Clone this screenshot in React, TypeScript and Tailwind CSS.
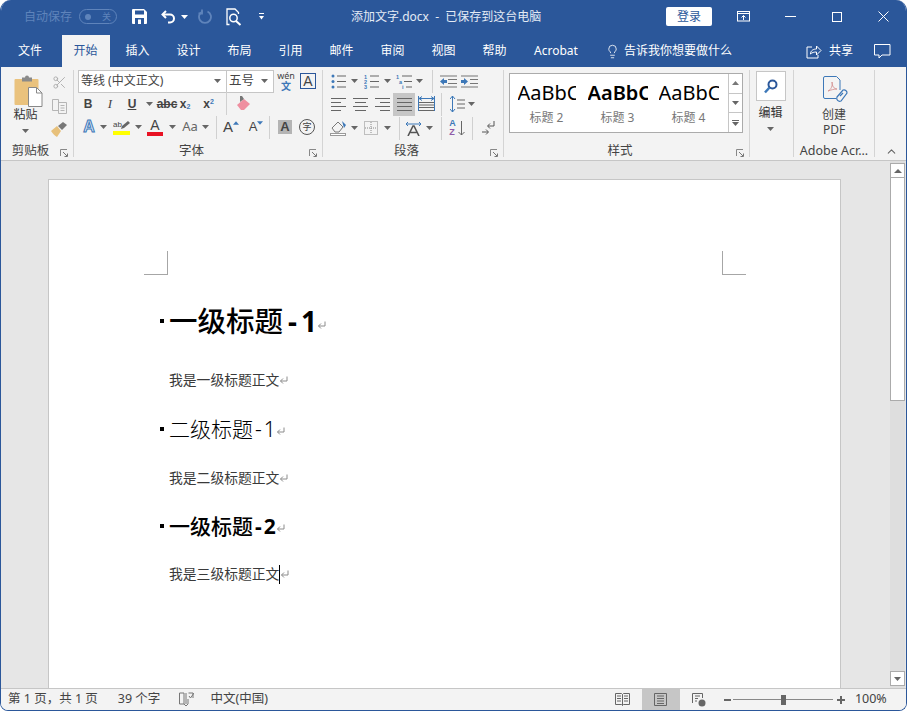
import type { ReactNode } from "react";
import { ChevronUp, Lightbulb, Scissors } from "lucide-react";

const Caret = ({ c = "" }: { c?: string }) => (
  <svg width="7" height="4" viewBox="0 0 7 4" className={`shrink-0 ${c}`}>
    <path d="M0 0h7L3.500 4z" fill="#666" />
  </svg>
);

const Launcher = () => (
  <svg width="9" height="9" viewBox="0 0 9 9" fill="none">
    <path d="M.5 7V.5H7" stroke="#888" />
    <path d="M3 3l4 4M4.500 7.500h3v-3" stroke="#777" />
  </svg>
);

const Sep = ({ h = "h-[23px]" }: { h?: string }) => <div className={`${h} w-px shrink-0 bg-[#d0d0d0]`} />;

const Cell = ({ w, children }: { w: string; children?: ReactNode }) => (
  <div className={`${w} flex h-full shrink-0 items-center justify-center`}>{children}</div>
);

const Lines = ({ rows, w = 15 }: { rows: [number, number][]; w?: number }) => (
  <svg width={w} height="15" viewBox={`0 0 ${w} 15`}>
    {rows.map(([x, l], i) => (
      <rect key={i} x={x} y={1 + i * (12 / (rows.length - 1))} width={l} height="1" fill="#666" />
    ))}
  </svg>
);

const Group = ({ w, label, launcher, children }: { w: string; label?: string; launcher?: boolean; children: ReactNode }) => (
  <div className={`${w} mt-[3px] flex h-[87px] shrink-0 flex-col border-r border-[#d4d4d4]`}>
    <div className="h-[71px] shrink-0">{children}</div>
    <div className="flex flex-1 items-center pt-[2px]">
      <div className="flex-1 truncate text-center text-[12.500px] leading-[16px] text-[#444]">{label}</div>
      {launcher ? <div className="mr-[4px] mt-[5px] flex"><Launcher /></div> : null}
    </div>
  </div>
);

const Tab = ({ w, active, children }: { w: string; active?: boolean; children: ReactNode }) => (
  <div className={`${w} flex h-full shrink-0 items-center justify-center`}>
    <div className={active ? "flex h-full w-[48px] items-center justify-center bg-[#f3f3f3] text-[#2b579a]" : "text-white"}>{children}</div>
  </div>
);

const Return = ({ c = "" }: { c?: string }) => (
  <svg width="9" height="9" viewBox="0 0 9 9" fill="none" className={`shrink-0 ${c}`}>
    <path d="M8 .5v4.500H1.500M4 2.500L1.500 5 4 7.500" stroke="#8c8c8c" />
  </svg>
);

const Bullet = () => <span className="mr-[5px] h-[4px] w-[4px] shrink-0 bg-black" />;

const Gallery = ({ bold, label, clip }: { bold?: boolean; label: string; clip: string }) => (
  <div className="flex w-[71px] shrink-0 flex-col items-center pt-[2px]">
    <div className={`${clip} h-[33px] overflow-hidden whitespace-nowrap font-['Noto_Sans',sans-serif] text-[20px] leading-[33px] text-black ${bold ? "font-semibold" : ""}`}>AaBbC</div>
    <div className="text-[12px] leading-[17px] text-[#777]">{label}</div>
  </div>
);

export default function App() {
  return (
    <div className="h-[711px] w-[907px] overflow-hidden bg-white font-['Noto_Sans','Noto_Sans_CJK_SC',sans-serif]">
      <div className="flex h-[711px] flex-col overflow-hidden rounded-t-[11px] rounded-b-[8px] border-x border-b border-[#2b579a]">
        {/* title bar */}
        <div className="flex h-[33px] shrink-0 items-center bg-[#2b579a] text-white">
          <div className="ml-[23px] w-[50px] text-[12px] text-[#5f84bb]">自动保存</div>
          <div className="ml-[5px] flex h-[15px] w-[38px] items-center justify-between rounded-full border border-[#5f84bb] px-[5px] text-[9px] text-[#5f84bb]">
            <span className="h-[6px] w-[6px] rounded-full bg-[#5f84bb]" />
            <span>关</span>
          </div>
          <svg width="15" height="15" viewBox="0 0 15 15" className="ml-[15px]">
            <path d="M0 1a1 1 0 011-1h11l3 3v11a1 1 0 01-1 1H1a1 1 0 01-1-1z" fill="#fff" />
            <rect x="3" y="1.500" width="9" height="4" fill="#2b579a" />
            <rect x="3" y="9" width="9" height="6" fill="#2b579a" />
            <rect x="6" y="10.500" width="3" height="4.500" fill="#fff" />
          </svg>
          <svg width="16" height="15" viewBox="0 0 16 15" fill="none" className="ml-[14px]">
            <path d="M5 2L1.500 5.500 5 9" stroke="#fff" strokeWidth="2" />
            <path d="M2 5.500h7a4 4 0 014 4v0a4 4 0 01-4 4H7" stroke="#fff" strokeWidth="2" />
          </svg>
          <Caret c="ml-[4px] [&>path]:fill-white" />
          <svg width="15" height="15" viewBox="0 0 15 15" fill="none" className="ml-[9px]">
            <path d="M10.500 2.500a6 6 0 11-5 0" stroke="#5f84bb" strokeWidth="1.800" />
            <path d="M5 .500v4h-3.500" stroke="#5f84bb" strokeWidth="1.800" />
          </svg>
          <svg width="16" height="18" viewBox="0 0 16 18" fill="none" className="ml-[14px]">
            <path d="M3.500 16.500H1V1h8l3.500 3.500V6" stroke="#fff" strokeWidth="1.300" />
            <circle cx="7.500" cy="10" r="3.700" stroke="#fff" strokeWidth="1.500" />
            <path d="M10 13l4.500 4" stroke="#fff" strokeWidth="2" />
          </svg>
          <svg width="7" height="8" viewBox="0 0 7 8" className="ml-[16px]">
            <rect x="1" width="5" height="1" fill="#fff" />
            <path d="M1 3h5L3.500 6.500z" fill="#fff" />
          </svg>
          <div className="ml-[86px] w-[195px] whitespace-nowrap text-[12px] text-[#e4ebf5]">添加文字.docx&nbsp;&nbsp;-&nbsp;&nbsp;已保存到这台电脑</div>
          <div className="ml-[120px] flex h-[19px] w-[46px] items-center justify-center rounded-[2px] bg-white text-[12px] text-[#2b579a]">登录</div>
          <svg width="14" height="12" viewBox="0 0 14 12" fill="none" className="ml-[25px]">
            <rect x=".5" y=".5" width="12" height="9.500" stroke="#fff" />
            <path d="M.5 2.500h12M6.500 9V4.500M4.500 6.500l2-2 2 2" stroke="#fff" />
          </svg>
          <div className="ml-[34px] h-px w-[11px] bg-white" />
          <div className="ml-[36px] h-[10px] w-[10px] border border-white" />
          <svg width="11" height="11" viewBox="0 0 11 11" className="ml-[36px]">
            <path d="M.5.500l10 10M10.500.500l-10 10" stroke="#fff" />
          </svg>
        </div>
        {/* tab row */}
        <div className="flex h-[34px] shrink-0 items-end bg-[#2b579a] text-[12px]">
          <div className="flex h-[32px] w-full items-stretch">
            <Tab w="w-[58px]">文件</Tab>
            <Tab w="w-[53px]" active>开始</Tab>
            <Tab w="w-[51px]">插入</Tab>
            <Tab w="w-[51px]">设计</Tab>
            <Tab w="w-[51px]">布局</Tab>
            <Tab w="w-[51px]">引用</Tab>
            <Tab w="w-[51px]">邮件</Tab>
            <Tab w="w-[51px]">审阅</Tab>
            <Tab w="w-[51px]">视图</Tab>
            <Tab w="w-[51px]">帮助</Tab>
            <Tab w="w-[72px]">Acrobat</Tab>
            <div className="ml-[13px] flex items-center text-white">
              <Lightbulb size={15} strokeWidth={1.3} />
              <span className="ml-[4px] whitespace-nowrap text-[12px]">告诉我你想要做什么</span>
            </div>
            <svg width="16" height="15" viewBox="0 0 16 15" fill="none" className="ml-[74px] mt-[9px]">
              <path d="M6 3H1v11h11v-3" stroke="#fff" />
              <path d="M4.500 10c0-3.500 3-5 6-5V2l4.500 4.500L10.500 11V8c-2.500 0-4.500.5-6 2z" stroke="#fff" />
            </svg>
            <span className="ml-[7px] flex items-center text-[12px] text-white">共享</span>
            <svg width="17" height="15" viewBox="0 0 17 15" fill="none" className="ml-[21px] mt-[9px]">
              <path d="M.5.500h15.500v10.500H8L5 14v-3H.5z" stroke="#fff" />
            </svg>
          </div>
        </div>
        {/* ribbon */}
        <div className="flex h-[94px] shrink-0 border-b border-[#c6c6c6] bg-[#f3f3f3] text-[#444]">
          <Group w="w-[73px]" label="剪贴板" launcher>
            <div className="flex h-full">
              <div className="flex w-[49px] flex-col items-center pt-[5px]">
                <svg width="29" height="32" viewBox="0 0 29 32" fill="none" className="ml-[5px]">
                  <rect x="0.500" y="4" width="24" height="26" rx="1" fill="#eac27d" />
                  <path d="M8 2.500h3a2 2 0 014 0h3v4H8z" fill="#8a8a8a" />
                  <path d="M14.500 12.500h8l5.500 5.500v13.500H14.500z" fill="#fff" stroke="#888" />
                  <path d="M22.500 12.500V18H28" stroke="#888" />
                </svg>
                <div className="mt-[0px] text-[12px] leading-[16px] text-[#333]">粘贴</div>
                <Caret c="mt-[6px]" />
              </div>
              <div className="flex w-[18px] flex-col items-center">
                <div className="flex h-[23px] items-center pt-[2px]"><Scissors size={15} color="#a8a8a8" strokeWidth={1.4} /></div>
                <div className="flex h-[24px] items-center pt-[2px]">
                  <svg width="15" height="15" viewBox="0 0 15 15" fill="none">
                    <path d="M.5.500h6v11h-6zM6.500 3.500h8v11h-8zM8.500 6.500h4M8.500 9h4M8.500 11.500h4" stroke="#b5b5b5" />
                  </svg>
                </div>
                <div className="flex h-[24px] items-center">
                  <svg width="16" height="15" viewBox="0 0 16 15">
                    <path d="M0 9l6-5 4 5-4 6c-2-1-4-3-6-6z" fill="#e7c07a" />
                    <path d="M7 4l5-4 4 3-5 5z" fill="#777" />
                  </svg>
                </div>
              </div>
            </div>
          </Group>
          <Group w="w-[249px]" label="字体" launcher>
            <div className="flex h-[22px] items-center pl-[4px]">
              <div className="flex h-[23px] w-[149px] items-center justify-between border border-[#c6c6c6] bg-white pl-[2px] pr-[5px] text-[12px] text-[#444]">
                等线 (中文正文)<Caret />
              </div>
              <div className="flex h-[23px] w-[47px] items-center justify-between border border-l-0 border-[#c6c6c6] bg-white pl-[2px] pr-[5px] text-[12.500px]">
                五号<Caret />
              </div>
              <div className="ml-[2px] flex w-[20px] flex-col items-center text-[9px] leading-[10px] text-[#444]">
                <span>wén</span>
                <span className="text-[10px] font-bold text-[#3d78b8]">文</span>
              </div>
              <div className="ml-[4px] flex h-[16px] w-[16px] items-center justify-center border border-[#2b579a] font-['Liberation_Sans',sans-serif] text-[14px] text-[#444]">A</div>
            </div>
            <div className="flex h-[23px] items-center pl-[3px] font-['Liberation_Sans',sans-serif]">
              <Cell w="w-[22px]"><b className="text-[12px]">B</b></Cell>
              <Cell w="w-[22px]"><i className="font-['Liberation_Serif',serif] text-[13px]">I</i></Cell>
              <Cell w="w-[22px]"><span className="text-[12px] font-bold underline">U</span></Cell>
              <Cell w="w-[12px]"><Caret /></Cell>
              <Cell w="w-[24px]"><span className="text-[12px] font-bold line-through">abc</span></Cell>
              <Cell w="w-[12px]"><span className="text-[12px] font-bold">x<sub className="text-[7px] text-[#3d78b8]">2</sub></span></Cell>
              <Cell w="w-[35px]"><span className="text-[12px] font-bold">x<sup className="text-[7px] text-[#3d78b8]">2</sup></span></Cell>
              <Sep />
              <Cell w="w-[33px]">
                <svg width="15" height="15" viewBox="0 0 15 15">
                  <path d="M1 9l7-6 6 5-6 6H5z" fill="#ef8fa0" />
                  <path d="M4 0l2 0 2 3-4 3z" fill="#777" />
                </svg>
              </Cell>
            </div>
            <div className="flex h-[24px] items-center pl-[5px]">
              <Cell w="w-[20px]"><span className="font-['Liberation_Sans',sans-serif] text-[16px] font-bold leading-none text-[#dbe8f7] [-webkit-text-stroke:1px_#3d78b8]">A</span></Cell>
              <Cell w="w-[8px]"><Caret /></Cell>
              <Cell w="w-[28px]">
                <div className="flex flex-col items-center">
                  <svg width="17" height="11" viewBox="0 0 17 11">
                    <path d="M8 9l1-3 6-5 2 2-6 5z" fill="#666" />
                    <text x="0" y="7" fontSize="8" fill="#444" fontFamily="Liberation Sans">ab</text>
                  </svg>
                  <span className="h-[4px] w-[17px] bg-[#ffff00]" />
                </div>
              </Cell>
              <Cell w="w-[6px]"><Caret /></Cell>
              <Cell w="w-[28px]">
                <div className="flex flex-col items-center">
                  <span className="font-['Liberation_Sans',sans-serif] text-[14px] leading-[12px] text-[#444]">A</span>
                  <span className="mt-[1px] h-[4px] w-[16px] bg-[#e81123]" />
                </div>
              </Cell>
              <Cell w="w-[6px]"><Caret /></Cell>
              <Cell w="w-[28px]"><span className="ml-[2px] font-['Noto_Sans',sans-serif] text-[13px] text-[#666]">Aa</span></Cell>
              <Cell w="w-[4px]"><Caret /></Cell>
              <Cell w="w-[9px]" />
              <Sep />
              <Cell w="w-[28px]">
                <span className="font-['Liberation_Sans',sans-serif] text-[15px] text-[#444]">A</span>
                <svg width="6" height="4" viewBox="0 0 7 4" className="mb-[8px] shrink-0"><path d="M0 4h7L3.500 0z" fill="#3d78b8" /></svg>
              </Cell>
              <Cell w="w-[22px]">
                <span className="font-['Liberation_Sans',sans-serif] text-[13px] text-[#444]">A</span>
                <svg width="6" height="4" viewBox="0 0 7 4" className="mb-[8px] shrink-0"><path d="M0 0h7L3.500 4z" fill="#3d78b8" /></svg>
              </Cell>
              <Cell w="w-[2px]" />
              <Sep />
              <Cell w="w-[8px]" />
              <div className="flex h-[14px] w-[14px] shrink-0 items-center justify-center bg-[#b4b4b4] font-['Liberation_Sans',sans-serif] text-[13px] font-bold text-[#444]">A</div>
              <div className="ml-[7px] flex h-[16px] w-[16px] shrink-0 items-center justify-center rounded-full border border-[#555] text-[9px] text-[#444]">字</div>
            </div>
          </Group>
          <Group w="w-[181px]" label="段落" launcher>
            <div className="flex h-[22px] items-center pl-[5px]">
              <Cell w="w-[20px]">
                <svg width="15" height="15" viewBox="0 0 15 15">
                  <circle cx="2" cy="2" r="1.500" fill="#3d78b8" /><circle cx="2" cy="7.500" r="1.500" fill="#3d78b8" /><circle cx="2" cy="13" r="1.500" fill="#3d78b8" />
                  <path d="M6 1.500h9v1H6zM6 7h9v1H6zM6 12.500h9v1H6z" fill="#666" />
                </svg>
              </Cell>
              <Cell w="w-[13px]"><Caret /></Cell>
              <Cell w="w-[20px]">
                <svg width="15" height="15" viewBox="0 0 15 15">
                  <path d="M6 1.500h9v1H6zM6 7h9v1H6zM6 12.500h9v1H6z" fill="#666" />
                  <text x="0" y="5" fontSize="5.500" fill="#3d78b8" fontFamily="Liberation Sans" fontWeight="700">1</text>
                  <text x="0" y="10" fontSize="5.500" fill="#3d78b8" fontFamily="Liberation Sans" fontWeight="700">2</text>
                  <text x="0" y="15" fontSize="5.500" fill="#3d78b8" fontFamily="Liberation Sans" fontWeight="700">3</text>
                </svg>
              </Cell>
              <Cell w="w-[13px]"><Caret /></Cell>
              <Cell w="w-[19px]">
                <svg width="17" height="15" viewBox="0 0 17 15">
                  <path d="M7 1.500h10v1H7zM9 7h8v1H9zM11 12.500h6v1h-6z" fill="#666" />
                  <text x="1" y="5" fontSize="5.500" fill="#3d78b8" fontFamily="Liberation Sans" fontWeight="700">1</text>
                  <text x="4" y="10" fontSize="5.500" fill="#3d78b8" fontFamily="Liberation Sans" fontWeight="700">a</text>
                  <text x="7" y="15" fontSize="5.500" fill="#3d78b8" fontFamily="Liberation Sans" fontWeight="700">i</text>
                </svg>
              </Cell>
              <Cell w="w-[12px]"><Caret /></Cell>
              <Cell w="w-[7px]" />
              <Sep />
              <Cell w="w-[30px]">
                <svg width="17" height="13" viewBox="0 0 17 13">
                  <path d="M0 .5h17v1H0zM8 4h9v1H8zM8 8h9v1H8zM0 11.500h17v1H0z" fill="#777" />
                  <path d="M0 6.500L4 3v2h3v3H4v2z" fill="#3d78b8" />
                </svg>
              </Cell>
              <Cell w="w-[13px]">
                <svg width="17" height="13" viewBox="0 0 17 13" className="shrink-0">
                  <path d="M0 .5h17v1H0zM9 4h8v1H9zM9 8h8v1H9zM0 11.500h17v1H0z" fill="#777" />
                  <path d="M7 6.500L3 3v2H0v3h3v2z" fill="#3d78b8" />
                </svg>
              </Cell>
            </div>
            <div className="flex h-[24px] items-center pl-[4px]">
              <Cell w="w-[22px]"><Lines rows={[[0, 15], [0, 10], [0, 15], [0, 10]]} /></Cell>
              <Cell w="w-[22px]"><Lines rows={[[0, 15], [2, 11], [0, 15], [2, 11]]} /></Cell>
              <Cell w="w-[22px]"><Lines rows={[[0, 15], [5, 10], [0, 15], [5, 10]]} /></Cell>
              <div className="flex h-[23px] w-[22px] shrink-0 items-center justify-center bg-[#c6c6c6]"><Lines rows={[[0, 15], [0, 15], [0, 15], [0, 15]]} /></div>
              <Cell w="w-[22px]">
                <svg width="17" height="16" viewBox="0 0 17 16" fill="none">
                  <path d="M.5 0v15M16.500 0v15M1 2.500h15M4 .5L1 2.500l3 2M13 .5l3 2-3 2" stroke="#3d78b8" />
                  <path d="M1 6.500h15M1 9h15M1 11.500h15M1 14.500h15" stroke="#666" />
                </svg>
              </Cell>
              <Cell w="w-[4px]" />
              <Sep />
              <Cell w="w-[27px]">
                <svg width="15" height="16" viewBox="0 0 15 16" fill="none" className="ml-[3px] shrink-0">
                  <path d="M2.500 0v16M0 3l2.500-3L5 3M0 13l2.500 3L5 13" stroke="#3d78b8" />
                  <path d="M7 4h8M7 8h8M7 12h8" stroke="#666" />
                </svg>
              </Cell>
              <Cell w="w-[4px]"><Caret /></Cell>
            </div>
            <div className="flex h-[24px] items-center pl-[5px]">
              <Cell w="w-[20px]">
                <svg width="17" height="16" viewBox="0 0 17 16" fill="none">
                  <path d="M2 8l6-6 5 5-4 5H5z" stroke="#777" />
                  <path d="M12 1l4 4-2 3z" fill="#3d78b8" />
                  <rect x=".5" y="13.500" width="15" height="2" stroke="#999" fill="#fff" />
                </svg>
              </Cell>
              <Cell w="w-[13px]"><Caret /></Cell>
              <Cell w="w-[20px]">
                <svg width="14" height="14" viewBox="0 0 14 14" fill="none">
                  <rect x=".5" y=".5" width="13" height="13" stroke="#888" strokeDasharray="1 1" />
                  <path d="M7 1v12M1 7h12" stroke="#888" strokeDasharray="1 1" />
                </svg>
              </Cell>
              <Cell w="w-[13px]"><Caret /></Cell>
              <Cell w="w-[5px]" />
              <Sep />
              <Cell w="w-[27px]">
                <svg width="17" height="15" viewBox="0 0 17 15" fill="none" className="shrink-0">
                  <path d="M1 3h15M1 3l2-2M1 3l2 2M16 3l-2-2M16 3l-2 2" stroke="#3d78b8" />
                  <path d="M3 15l5-10h1l5 10M5.500 11.500h6" stroke="#555" strokeWidth="1.600" />
                </svg>
              </Cell>
              <Cell w="w-[4px]"><Caret /></Cell>
              <Cell w="w-[10px]" />
              <Sep />
              <Cell w="w-[30px]">
                <span className="flex flex-col font-['Liberation_Sans',sans-serif] text-[9px] font-bold leading-[9px]">
                  <span className="text-[#3d78b8]">A</span>
                  <span className="text-[#8f5aa8]">Z</span>
                </span>
                <svg width="7" height="15" viewBox="0 0 7 15" fill="none" className="ml-[2px]"><path d="M3.500 0v14M.5 11l3 3 3-3" stroke="#666" /></svg>
              </Cell>
              <Sep />
              <Cell w="w-[31px]">
                <svg width="13" height="14" viewBox="0 0 13 14" fill="none">
                  <path d="M12 0v5H6M8 2.500L5.500 5 8 7.500" stroke="#555" />
                  <path d="M0 11h6M4 8.500L6.500 11 4 13.500" stroke="#555" />
                </svg>
              </Cell>
            </div>
          </Group>
          <Group w="w-[246px]" label="样式" launcher>
            <div className="ml-[5px] mt-[3px] flex h-[60px] w-[234px] border border-[#ababab] bg-white">
              <div className="flex flex-1 pl-[1px]">
                <Gallery label="标题 2" clip="w-[58px]" />
                <Gallery bold label="标题 3" clip="w-[60px]" />
                <Gallery label="标题 4" clip="w-[60px]" />
              </div>
              <div className="flex w-[14px] flex-col border-l border-[#c6c6c6]">
                <div className="flex flex-1 items-center justify-center border-b border-[#c6c6c6]"><svg width="7" height="4" viewBox="0 0 7 4"><path d="M0 4h7L3.500 0z" fill="#777" /></svg></div>
                <div className="flex flex-1 items-center justify-center border-b border-[#c6c6c6]"><Caret /></div>
                <div className="flex flex-1 flex-col items-center justify-center gap-[1px]"><span className="h-px w-[7px] bg-[#666]" /><Caret /></div>
              </div>
            </div>
          </Group>
          <Group w="w-[44px]">
            <div className="flex flex-col items-center pr-[2px]">
              <div className="mt-[1px] flex h-[30px] w-[30px] items-center justify-center border border-[#c6c6c6] bg-white">
                <svg width="14" height="15" viewBox="0 0 14 15" fill="none">
                  <circle cx="8.500" cy="5.500" r="4" stroke="#2b579a" strokeWidth="2" />
                  <path d="M5.500 8.500L1 13.500" stroke="#3d78b8" strokeWidth="2.500" />
                </svg>
              </div>
              <div className="mt-[4px] text-[12px] leading-[16px] text-[#333]">编辑</div>
              <Caret c="mt-[6px]" />
            </div>
          </Group>
          <Group w="w-[81px]" label="Adobe Acr...">
            <div className="flex flex-col items-center">
              <svg width="26" height="29" viewBox="0 0 26 29" fill="none" className="ml-[4px] mt-[6px]">
                <path d="M17 14V4l-3.500-3.500H2A1.500 1.500 0 00.5 2v19A1.500 1.500 0 002 22.500h11" stroke="#3d78b8" />
                <path d="M5 15c3-1 5-6 4-9 0 4 2 7 5 7-3 0-6 1-9 2z" stroke="#d08a8a" strokeWidth=".8" />
                <path d="M14 21l6-7a3 3 0 014 3l-6 8a3 3 0 01-4-4zM17 20l3-3" stroke="#3d78b8" strokeWidth="1.200" />
              </svg>
              <div className="mt-[2px] text-[12px] leading-[16px] text-[#444]">创建</div>
              <div className="text-[12px] leading-[14px] text-[#444]">PDF</div>
            </div>
          </Group>
          <div className="flex flex-1 items-end justify-center pb-[2px] pl-[1px]">
            <ChevronUp size={13} color="#666" strokeWidth={2} />
          </div>
        </div>
        {/* document */}
        <div className="flex min-h-0 flex-1 bg-[#e6e6e6]">
          <div className="min-w-0 flex-1 overflow-hidden pl-[47px] pt-[18px]">
            <div className="h-[520px] w-[793px] border-x border-t border-[#c6c6c6] bg-white">
              <div className="ml-[95px] mr-[94px] mt-[71px] flex justify-between">
                <div className="h-[24px] w-[24px] border-b border-r border-[#a6a6a6]" />
                <div className="h-[24px] w-[24px] border-b border-l border-[#a6a6a6]" />
              </div>
              <div className="ml-[111px] text-black">
                <div className="mt-[26px] flex h-[40px] items-center font-medium text-[#000]">
                  <Bullet />
                  <span className="text-[28.500px] leading-[40px]">一级标题</span>
                  <span className="ml-[5px] mr-[-4px] text-[28px] font-bold leading-[40px] tracking-[4px]">-1</span>
                  <Return c="mt-[8px]" />
                </div>
                <div className="mt-[29px] flex h-[20px] items-center pl-[9px] text-[13.800px] text-[#3a3a3a]">我是一级标题正文<Return /></div>
                <div className="mt-[24px] flex h-[30px] items-center font-light text-black">
                  <Bullet />
                  <span className="text-[21px] leading-[30px]">二级标题</span>
                  <span className="ml-[2px] mr-[-2px] text-[21px] leading-[30px] tracking-[2px]">-1</span>
                  <Return c="mt-[4px]" />
                </div>
                <div className="mt-[24px] flex h-[20px] items-center pl-[9px] text-[13.800px] text-[#3a3a3a]">我是二级标题正文<Return /></div>
                <div className="mt-[23px] flex h-[30px] items-center font-medium text-[#000]">
                  <Bullet />
                  <span className="text-[21px] leading-[30px]">一级标题</span>
                  <span className="ml-[2px] mr-[-2px] text-[21px] font-bold leading-[30px] tracking-[2px]">-2</span>
                  <Return c="mt-[4px]" />
                </div>
                <div className="mt-[23px] flex h-[20px] items-center pl-[9px] text-[13.800px] text-[#3a3a3a]">
                  我是三级标题正文
                  <span className="h-[19px] w-px bg-black" />
                  <Return />
                </div>
              </div>
            </div>
          </div>
          <div className="flex w-[15px] flex-col bg-[#dedede]">
            <div className="mt-[2px] flex h-[15px] shrink-0 items-center justify-center border border-[#ababab] bg-white"><svg width="8" height="4" viewBox="0 0 8 4"><path d="M0 4h8L4 0z" fill="#666" /></svg></div>
            <div className="h-[223px] shrink-0 border-x border-b border-[#ababab] bg-white" />
            <div className="flex-1" />
            <div className="mb-[2px] flex h-[15px] shrink-0 items-center justify-center border border-[#ababab] bg-white"><Caret /></div>
          </div>
          <div className="w-px" />
        </div>
        {/* status bar */}
        <div className="flex h-[22px] shrink-0 items-center border-t border-[#c6c6c6] bg-[#f3f3f3] text-[12.500px] text-[#444]">
          <span className="ml-[7px] whitespace-pre">第 1 页，共 1 页</span>
          <span className="ml-[20px] whitespace-pre">39 个字</span>
          <svg width="15" height="15" viewBox="0 0 15 15" fill="none" className="ml-[19px]">
            <path d="M5 1H.5v11H5l2 2 2-2V7M5 1v11M7 1v11M9.500 1H14v5" stroke="#777" />
            <path d="M10 4l1.500 2L15 1" stroke="#777" />
          </svg>
          <span className="ml-[16px] whitespace-pre">中文(中国)</span>
          <div className="ml-[347px] flex h-full items-center">
            <svg width="15" height="13" viewBox="0 0 15 13" fill="none">
              <path d="M.5.500h6l1 1 1-1h6v11h-6l-1 1-1-1h-6zM7.500 1.500v11M2 3h4M2 5.500h4M2 8h4M9 3h4M9 5.500h4M9 8h4" stroke="#666" />
            </svg>
            <div className="ml-[12px] flex h-full w-[38px] items-center justify-center bg-[#c6c6c6]">
              <svg width="13" height="13" viewBox="0 0 13 13" fill="none">
                <path d="M.5.500h12v12H.5zM3 3h7M3 5.500h7M3 8h7M3 10.500h7" stroke="#666" />
              </svg>
            </div>
            <svg width="14" height="14" viewBox="0 0 14 14" fill="none" className="ml-[12px]">
              <path d="M.5 10V.5h10V5M3 3h5M3 5.500h3M3 8h2" stroke="#666" />
              <circle cx="10" cy="10" r="3.500" fill="#666" />
            </svg>
            <div className="ml-[18px] h-[2px] w-[7px] bg-[#666]" />
            <div className="ml-[2px] flex w-[100px] items-center">
              <div className="h-px w-[48px] bg-[#888]" />
              <div className="h-[10px] w-[5px] bg-[#666]" />
              <div className="h-px flex-1 bg-[#888]" />
            </div>
            <div className="relative ml-[4px] h-[8px] w-[8px]">
              <div className="absolute left-0 top-[3px] h-[2px] w-[8px] bg-[#666]" />
              <div className="absolute left-[3px] top-0 h-[8px] w-[2px] bg-[#666]" />
            </div>
            <span className="ml-[10px]">100%</span>
          </div>
        </div>
      </div>
    </div>
  );
}
